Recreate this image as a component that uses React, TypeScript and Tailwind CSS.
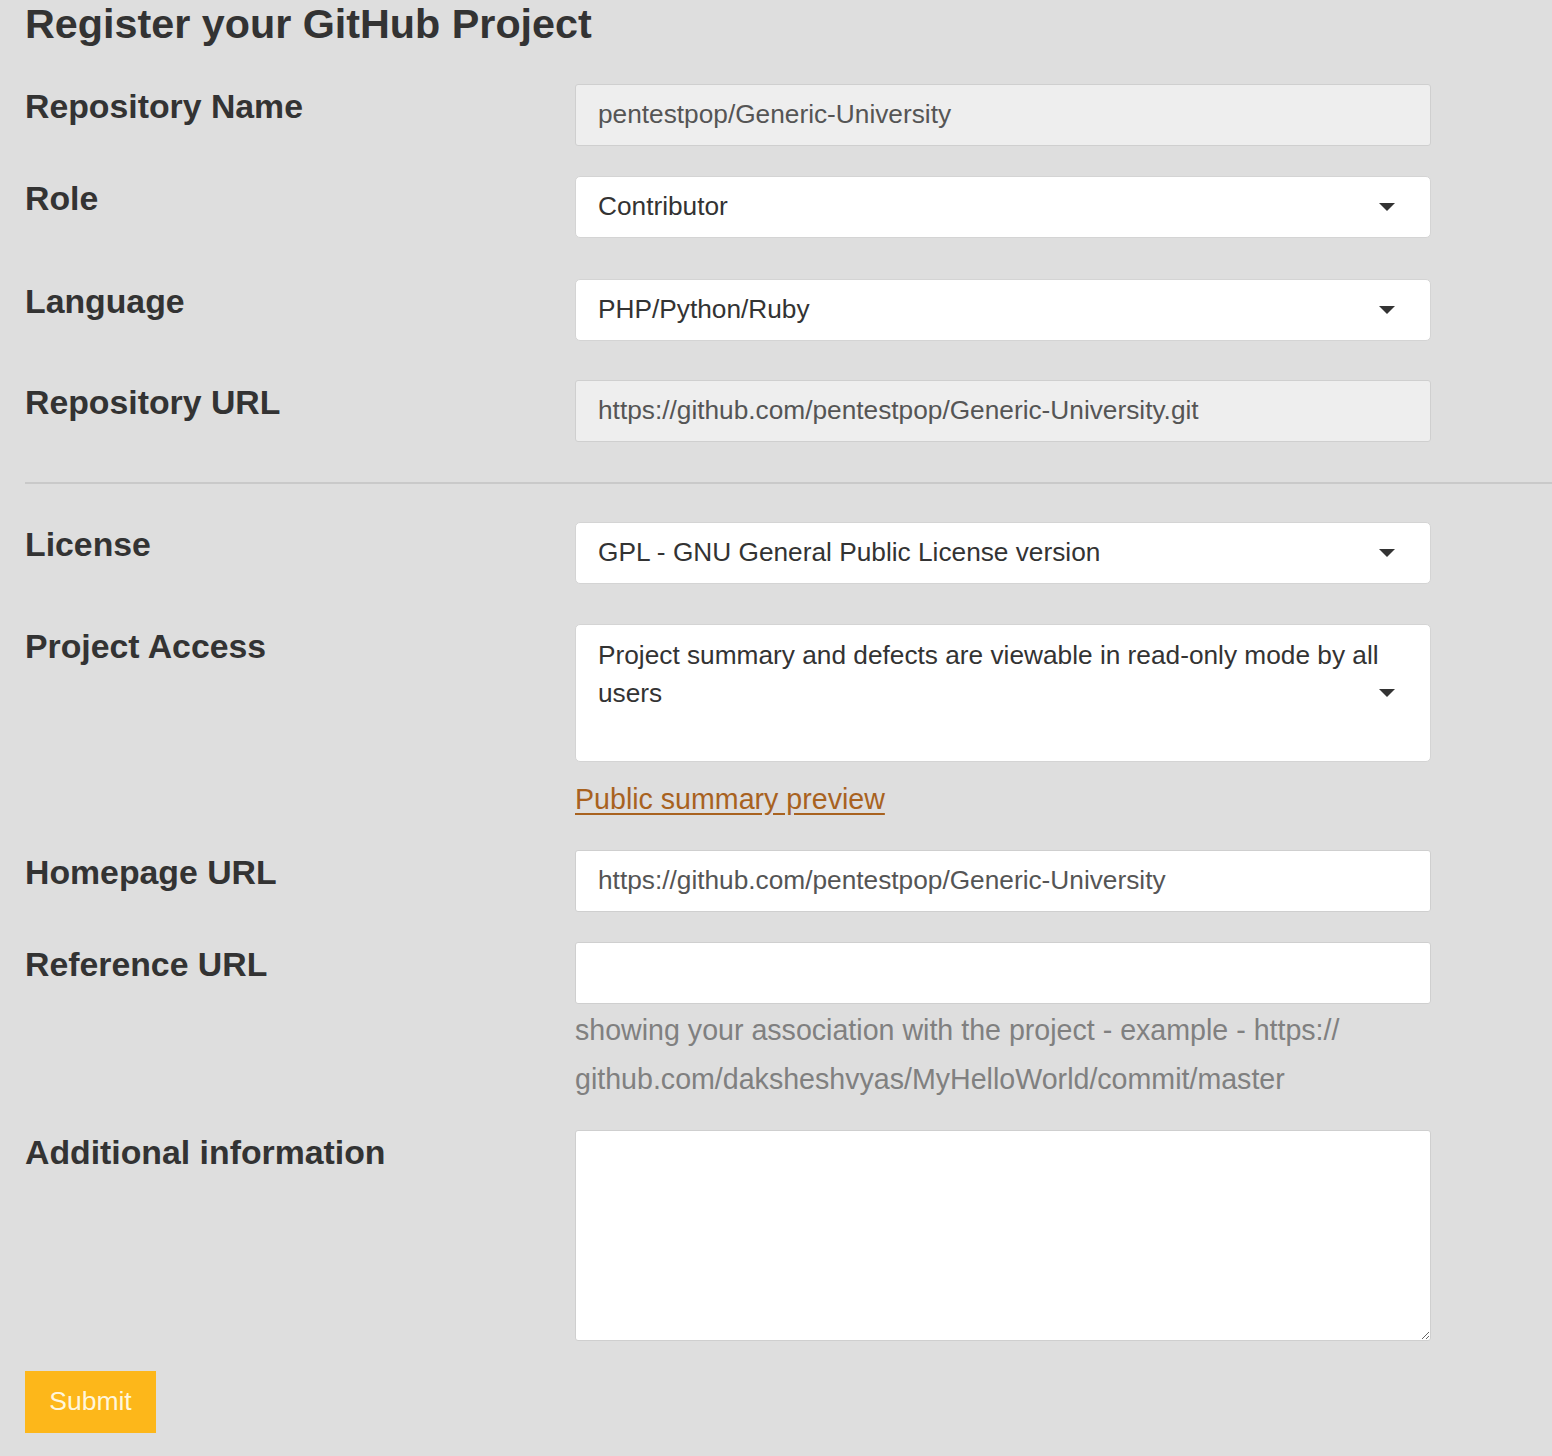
import React from 'react';

const Caret = () => (
    <svg width="16" height="8" viewBox="0 0 16 8" className="shrink-0">
        <path d="M0 0 L16 0 L8 8 Z" fill="#333" />
    </svg>
);

function Row({ label, mt, children }: { label: string; mt: string; children: React.ReactNode }) {
    return (
        <div className={`grid grid-cols-[550px_856px] ${mt}`}>
            <label className="pt-[2px] text-[33.8px] leading-[40px] font-bold text-[#333]">{label}</label>
            <div>{children}</div>
        </div>
    );
}

function TextBox({ value, readOnly }: { value: string; readOnly?: boolean }) {
    return (
        <div
            className={`h-[62px] flex items-center px-[22px] border border-[#cfcfcf] rounded-[3px] text-[26.25px] text-[#555] ${
                readOnly ? 'bg-[#eeeeee]' : 'bg-white'
            }`}
        >
            {value}
        </div>
    );
}

function SelectBox({ value }: { value: string }) {
    return (
        <div className="h-[62px] flex items-center justify-between pl-[22px] pr-[35px] bg-white border border-[#d4d4d4] rounded-[5px] text-[26.25px] text-[#333]">
            <span>{value}</span>
            <Caret />
        </div>
    );
}

export default function App() {
    return (
        <div className="min-h-[1456px] bg-[#dedede] pl-[25px] font-['Liberation_Sans',Arial,sans-serif]">
            <h1 className="text-[41.3px] leading-[48px] font-bold text-[#333]">Register your GitHub Project</h1>

            <Row label="Repository Name" mt="mt-[36px]">
                <TextBox value="pentestpop/Generic-University" readOnly />
            </Row>
            <Row label="Role" mt="mt-[30px]">
                <SelectBox value="Contributor" />
            </Row>
            <Row label="Language" mt="mt-[41px]">
                <SelectBox value="PHP/Python/Ruby" />
            </Row>
            <Row label="Repository URL" mt="mt-[39px]">
                <TextBox value="https://github.com/pentestpop/Generic-University.git" readOnly />
            </Row>

            <hr className="mt-[40px] border-t-2 border-[#c9c9c9]" />

            <Row label="License" mt="mt-[38px]">
                <SelectBox value="GPL - GNU General Public License version" />
            </Row>
            <Row label="Project Access" mt="mt-[40px]">
                <div className="h-[138px] flex items-center justify-between pl-[22px] pr-[35px] bg-white border border-[#d4d4d4] rounded-[5px] text-[26.25px] leading-[38px] text-[#333]">
                    <span className="self-start pt-[11px] w-[790px]">
                        Project summary and defects are viewable in read-only mode by all users
                    </span>
                    <Caret />
                </div>
                <a href="#" className="block mt-[22px] w-fit text-[28.6px] leading-[30px] text-[#a8621f] underline underline-offset-[4px]">
                    Public summary preview
                </a>
            </Row>
            <Row label="Homepage URL" mt="mt-[36px]">
                <TextBox value="https://github.com/pentestpop/Generic-University" />
            </Row>
            <Row label="Reference URL" mt="mt-[30px]">
                <TextBox value="" />
                <p className="mt-[2px] text-[28.6px] leading-[49px] text-[#808080]">
                    showing your association with the project - example - https://
                    <br />
                    github.com/daksheshvyas/MyHelloWorld/commit/master
                </p>
            </Row>
            <Row label="Additional information" mt="mt-[26px]">
                <textarea className="block w-full h-[211px] bg-white border border-[#cfcfcf] rounded-[3px] resize" />
            </Row>

            <button className="mt-[30px] h-[62px] w-[131px] bg-[#fdb71a] text-[#fff6dc] text-[26.5px]">Submit</button>
        </div>
    );
}
